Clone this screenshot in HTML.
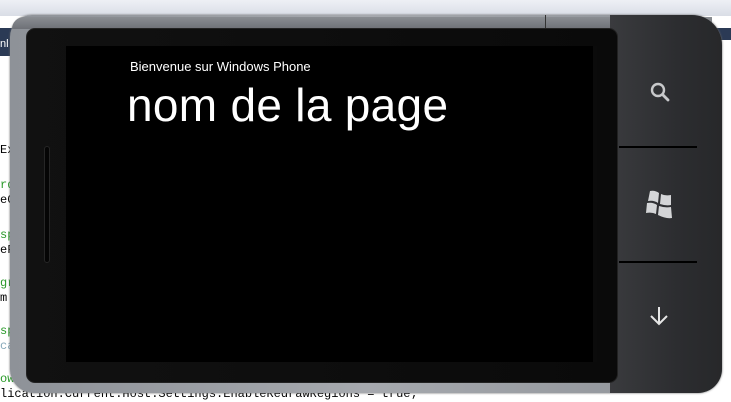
<!DOCTYPE html>
<html><head><meta charset="utf-8"><style>
*{margin:0;padding:0;box-sizing:border-box}
body{width:731px;height:402px;overflow:hidden;background:#fff;position:relative;font-family:"Liberation Sans",sans-serif}
.abs{position:absolute}
.code{font-family:"Liberation Mono",monospace;font-size:12px;position:absolute;left:0;white-space:pre}
</style></head><body>
<div class="abs" style="left:0;top:0;width:731px;height:16px;background:linear-gradient(#eef0f5,#d9dde6)"></div>
<div class="abs" style="left:0;top:28px;width:12px;height:28px;background:#2b3a55"></div>
<div class="abs" style="left:0;top:38px;color:#fff;font-size:11px">nl</div>
<div class="code" style="top:128px;color:#2a9a2a">  h</div>
<div class="code" style="top:143px;color:#000">Ex</div>
<div class="code" style="top:178px;color:#2a9a2a">rd</div>
<div class="code" style="top:193px;color:#000">eC</div>
<div class="code" style="top:228px;color:#2a9a2a">sp</div>
<div class="code" style="top:243px;color:#000">eF</div>
<div class="code" style="top:276px;color:#2a9a2a">gra</div>
<div class="code" style="top:291px;color:#000">m.</div>
<div class="code" style="top:324px;color:#2a9a2a">sp</div>
<div class="code" style="top:339px;color:#8ab">ca</div>
<div class="code" style="top:372px;color:#2a9a2a">ow</div>
<div class="code" style="top:387px;color:#000">lication.Current.Host.Settings.EnableRedrawRegions = true;</div>
<div class="abs" style="left:716px;top:28px;width:15px;height:12px;background:#2b3a55"></div>
<div class="abs" style="left:10px;top:15px;width:712px;height:378px;border-radius:22px 30px 24px 24px;background:linear-gradient(90deg,#8e9298,#a6a9ae 50%,#8e9298);box-shadow:0 0 2px #666"></div>
<div class="abs" style="left:12px;top:17px;width:700px;height:12px;border-radius:20px 0 0 0;background:linear-gradient(#8a8d92,#6e7177)"></div>
<div class="abs" style="left:610px;top:15px;width:112px;height:378px;border-radius:0 30px 24px 0;background:linear-gradient(90deg,#3a3b3e,#2c2d30 60%,#27282a)"></div>
<div class="abs" style="left:545px;top:15px;width:1px;height:13px;background:#333"></div>
<div class="abs" style="left:26px;top:28px;width:592px;height:355px;border-radius:9px;background:linear-gradient(90deg,#111,#0a0a0a);border:1px solid #222"></div>
<div class="abs" style="left:66px;top:46px;width:531px;height:316px;background:#000"></div>
<div class="abs" style="left:593px;top:46px;width:4px;height:316px;background:#0b0b0b"></div>
<div class="abs" style="left:44px;top:146px;width:6px;height:117px;border-radius:3px;background:#050505;border:1px solid #262626"></div>
<div class="abs" style="left:130px;top:59px;color:#fff;font-size:13px">Bienvenue sur Windows Phone</div>
<div class="abs" style="left:127px;top:78px;color:#fff;font-size:46px;letter-spacing:0.3px">nom de la page</div>
<div class="abs" style="left:619px;top:146px;width:78px;height:2px;background:#000"></div>
<div class="abs" style="left:619px;top:261px;width:78px;height:2px;background:#000"></div>
<svg class="abs" style="left:648px;top:80px" width="24" height="24" viewBox="0 0 24 24"><circle cx="10" cy="10" r="6" fill="none" stroke="#c8c9cb" stroke-width="2.4"/><path d="M14.5 14.5L20 20" stroke="#c8c9cb" stroke-width="2.8" stroke-linecap="round"/></svg>
<svg class="abs" style="left:643px;top:189px" width="34" height="34" viewBox="0 0 34 34"><g fill="#d4d5d7"><path d="M7 2Q12 1 16 4L15 14Q11 11 5 12Z"/><path d="M18 5Q22 7 28 6L28 16Q23 17 17 15Z"/><path d="M4 14Q10 13 14 16L13 25Q9 23 3 24Z"/><path d="M16 17Q22 19 28 18L29 29Q23 30 15 26Z"/></g></svg>
<svg class="abs" style="left:648px;top:305px" width="22" height="22" viewBox="0 0 22 22"><path d="M11 2V19M3 11L11 19L19 11" fill="none" stroke="#e6e6e6" stroke-width="2"/></svg>
</body></html>
